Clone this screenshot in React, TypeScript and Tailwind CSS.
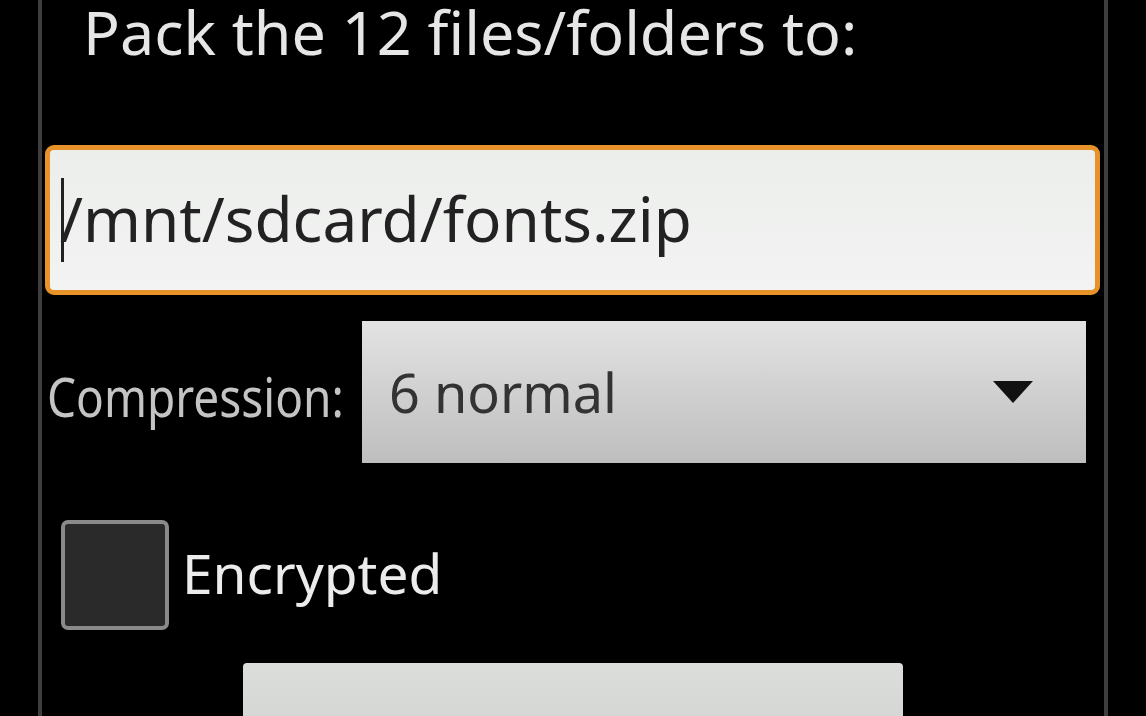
export default function App() {
  return (
    <div
      className="w-[1146px] h-[716px] bg-black overflow-hidden flex"
      style={{ fontFamily: '"Noto Sans", "Open Sans", sans-serif' }}
    >
      {/* left frame */}
      <div className="w-[38px] shrink-0" />
      <div className="w-[4px] shrink-0 bg-[#3e3e3e]" />

      {/* dialog body */}
      <div className="w-[1062px] shrink-0 flex flex-col">
        <div className="shrink-0 pl-[41px] h-[145px] text-[61px] leading-[64px] text-[#e6e6e6] whitespace-nowrap">
          Pack the 12 files/folders to:
        </div>

        <div className="shrink-0 ml-[3px] w-[1055px] h-[150px] rounded-[9px] border-[5px] border-[#e8922a] bg-gradient-to-b from-[#eceeec] to-[#f2f3f2] flex items-center">
          <span className="w-[3px] h-[84px] bg-[#222] ml-[11px] shrink-0" />
          <span className="text-[62px] text-[#222] leading-none -ml-[4px] pb-[4px] whitespace-nowrap">/mnt/sdcard/fonts.zip</span>
        </div>

        <div className="shrink-0 flex items-center mt-[26px] h-[142px]">
          <div className="w-[320px] pl-[5px] mt-[7px]">
            <span className="inline-block text-[46px] text-[#c4c4c4] leading-none scale-y-[1.2]">Compression:</span>
          </div>
          <div className="w-[724px] h-[142px] bg-gradient-to-b from-[#e2e3e2] to-[#bebebe] flex items-center justify-between pl-[27px] pr-[53px]">
            <span className="text-[54px] text-[#333] leading-none">6 normal</span>
            <svg width="40" height="22" viewBox="0 0 40 22" className="mb-[1px]">
              <path d="M0 0 H40 L20 22 Z" fill="#111" />
            </svg>
          </div>
        </div>

        <div className="shrink-0 flex items-center mt-[57px] h-[110px]">
          <div className="ml-[19px] w-[108px] h-[110px] rounded-[7px] border-[4px] border-[#8a8a8a] bg-[#2a2a2a] shrink-0" />
          <span className="ml-[13px] text-[55px] text-[#ececec] leading-none pb-[6px]">Encrypted</span>
        </div>

        <div className="shrink-0 mt-[33px] ml-[201px] w-[660px] h-[80px] rounded-t-[4px] bg-gradient-to-b from-[#dcdedc] to-[#d2d4d2]" />
      </div>

      {/* right frame */}
      <div className="w-[4px] shrink-0 bg-[#3e3e3e]" />
      <div className="flex-1" />
    </div>
  );
}
